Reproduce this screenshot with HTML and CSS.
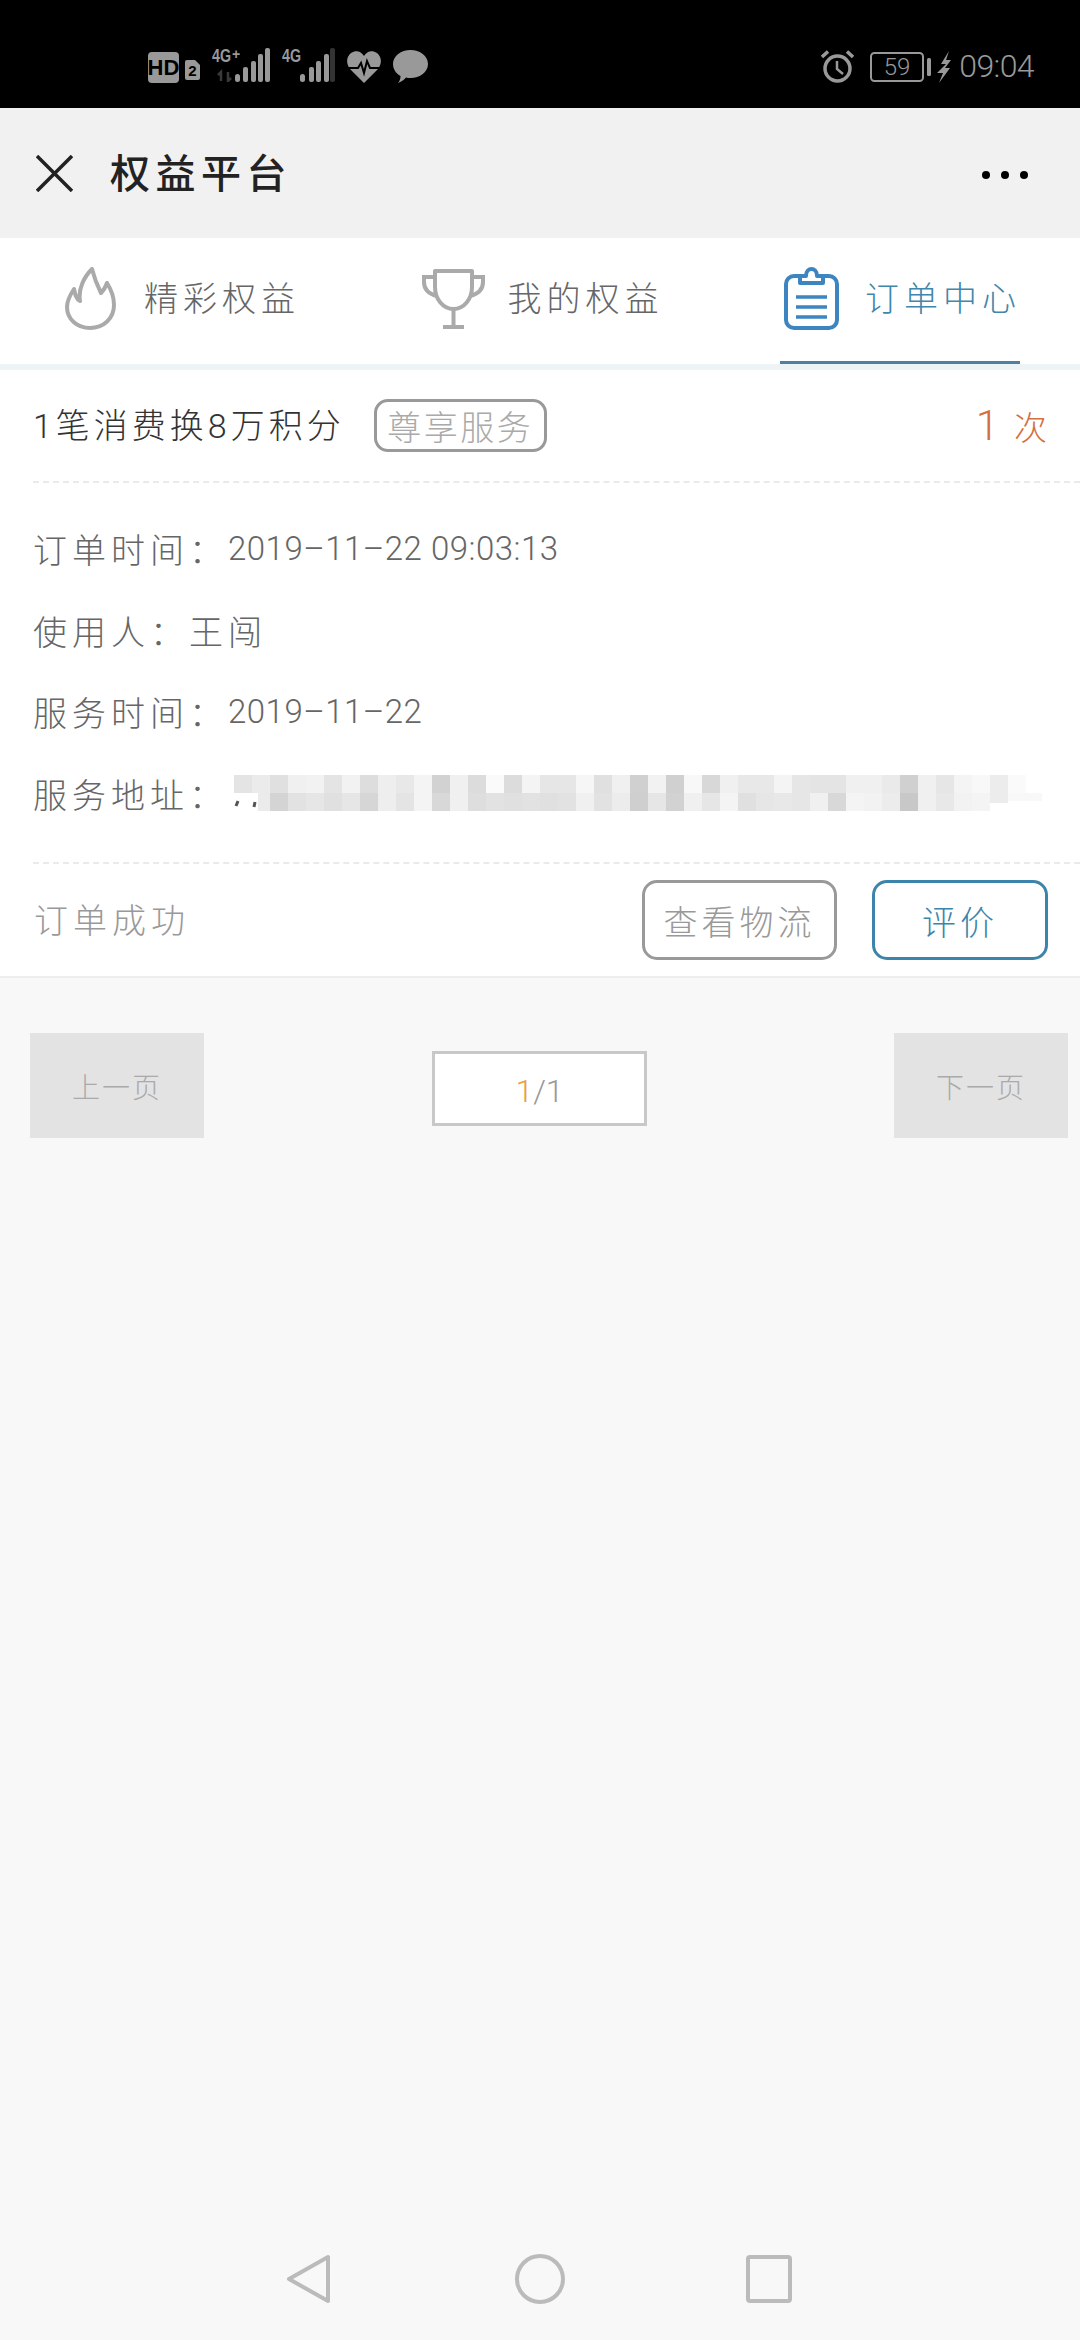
FILE: index.html
```html
<!DOCTYPE html>
<html lang="zh-CN">
<head>
  <meta charset="UTF-8">
  <meta name="viewport" content="width=device-width, initial-scale=1.0">
  <title>权益平台</title>
  <link rel="stylesheet" href="styles.css">
</head>
<body>
  <div class="status-bar">
    <div class="status-left">
      <svg class="icon-hd" width="31" height="31" viewBox="0 0 31 31">
        <rect width="31" height="31" rx="4" fill="#999"/>
        <text x="15.5" y="23" text-anchor="middle" class="svg-hd">HD</text>
      </svg>
      <svg class="icon-sim" width="15" height="20" viewBox="0 0 15 20">
        <path d="M2 0H10L15 5V18a2 2 0 0 1-2 2H2a2 2 0 0 1-2-2V2a2 2 0 0 1 2-2Z" fill="#999"/>
        <text x="7.5" y="16" text-anchor="middle" class="svg-sim">2</text>
      </svg>
      <svg class="icon-signal" width="58" height="38" viewBox="0 0 58 38">
        <text x="0" y="18" textLength="19" lengthAdjust="spacingAndGlyphs" class="svg-net">4G</text>
        <text x="20" y="15" class="svg-plus">+</text>
        <path d="M9 37V28L6 31M16 28V37L19 34" fill="none" stroke="#3a3a3a" stroke-width="2.500"/>
        <g fill="#999">
          <rect x="23" y="30" width="5" height="8" rx="2.5"/>
          <rect x="31" y="23" width="5" height="15" rx="2"/>
          <rect x="39" y="17" width="5" height="21" rx="2"/>
          <rect x="46" y="10" width="5" height="28" rx="2"/>
          <rect x="53" y="4" width="5" height="34" rx="2"/>
        </g>
      </svg>
      <svg class="icon-signal" width="53" height="38" viewBox="0 0 53 38">
        <text x="0" y="18" textLength="19" lengthAdjust="spacingAndGlyphs" class="svg-net">4G</text>
        <g fill="#999">
          <rect x="18" y="30" width="5" height="8" rx="2.5"/>
          <rect x="27" y="23" width="5" height="15" rx="2"/>
          <rect x="34" y="17" width="5" height="21" rx="2"/>
          <rect x="42" y="10" width="5" height="28" rx="2"/>
        </g>
        <rect x="48" y="4" width="5" height="34" rx="2" fill="#333"/>
      </svg>
      <svg class="icon-heart" width="34" height="32" viewBox="0 0 34 32">
        <path d="M17 32L3 18C-1 13-1 6 4 2C9-1 14 0 17 5C20 0 25-1 30 2C35 6 35 13 31 18Z" fill="#999"/>
        <path d="M1 17H11L14 12L17 22L20 10L23 17H33" fill="none" stroke="#000" stroke-width="2"/>
      </svg>
      <svg class="icon-bubble" width="35" height="33" viewBox="0 0 35 33">
        <path d="M17.5 0C27 0 35 6 35 14C35 22 27 28 17.5 28C16 28 14.500 28 13 27.500C11 30 8 32 5 33C7 31 7.500 28 7.500 26C3 23.500 0 19 0 14C0 6 8 0 17.5 0Z" fill="#999"/>
      </svg>
    </div>
    <div class="status-right">
      <svg class="icon-alarm" width="33" height="33" viewBox="0 0 33 33">
        <circle cx="16.500" cy="18.500" r="12.500" fill="none" stroke="#999" stroke-width="3.500"/>
        <path d="M16 11V19L22 24" fill="none" stroke="#999" stroke-width="2.500"/>
        <path d="M1 7L7 1.500M32 7L26 1.500" fill="none" stroke="#999" stroke-width="3.500"/>
      </svg>
      <svg class="icon-battery" width="61" height="30" viewBox="0 0 61 30">
        <rect x="1" y="1" width="52" height="28" rx="3.500" fill="none" stroke="#999" stroke-width="2"/>
        <text x="27" y="23" text-anchor="middle" class="svg-level">59</text>
        <rect x="57" y="6" width="4" height="18" rx="1.500" fill="#999"/>
      </svg>
      <svg class="icon-bolt" width="14" height="32" viewBox="0 0 14 32">
        <path d="M12 0L4 13L9 13L0 22L6 22L2 32L13 17L8 17L14 9L9 9Z" fill="#999"/>
      </svg>
      <span class="status-time">09:04</span>
    </div>
  </div>

  <div class="top-bar">
    <svg class="icon-close" width="37" height="37" viewBox="0 0 37 37">
      <path d="M1 1L36 36M36 1L1 36" fill="none" stroke="#222" stroke-width="3.500"/>
    </svg>
    <span class="top-title">权益平台</span>
    <div class="top-dots"><i></i><i></i><i></i></div>
  </div>

  <div class="tabs">
    <div class="tab">
      <svg width="51" height="63" viewBox="0 0 51 63">
        <path d="M27 2C30 14 33 20 36 26C39 23 41 19 42 16C47 24 49 31 49 38C49 52 38 61 25 61C12 61 2 52 2 40C2 33 5 28 9 22C10 27 11 32 15 34C13 22 19 10 27 2Z" fill="none" stroke="#aaa" stroke-width="4" stroke-linejoin="round"/>
      </svg>
      <span>精彩权益</span>
    </div>
    <div class="tab tab-trophy">
      <svg width="63" height="62" viewBox="0 0 63 62">
        <path d="M13 4H50V20C50 32 42 42 31.500 42C21 42 13 32 13 20Z" fill="none" stroke="#aaa" stroke-width="4" stroke-linejoin="round"/>
        <path d="M13 10H2V15C2 22 7 27 15 29M50 10H61V15C61 22 56 27 48 29" fill="none" stroke="#aaa" stroke-width="4"/>
        <path d="M31.500 42V60M21 60H42" fill="none" stroke="#aaa" stroke-width="4"/>
      </svg>
      <span>我的权益</span>
    </div>
    <div class="tab tab-active">
      <svg width="55" height="63" viewBox="0 0 55 63">
        <rect x="2" y="9" width="51" height="52" rx="8" fill="none" stroke="#3d85c0" stroke-width="4"/>
        <path d="M16 16V9H22C22 4 25 2 27.500 2C30 2 33 4 33 9H39V16Z" fill="#fff" stroke="#3d85c0" stroke-width="4" stroke-linejoin="round"/>
        <path d="M12 30H43M12 40H43M12 50H43" fill="none" stroke="#3d85c0" stroke-width="3.500"/>
      </svg>
      <span>订单中心</span>
    </div>
  </div>

  <div class="order-card">
    <div class="order-head">
      <span class="order-name">1笔消费换8万积分</span>
      <span class="order-tag">尊享服务</span>
      <span class="order-count"><b>1</b>次</span>
    </div>
    <div class="order-info">
      <div class="info-row">
        <span class="info-label">订单时间：</span><span class="info-num">2019–11–22 09:03:13</span>
      </div>
      <div class="info-row">
        <span class="info-label">使用人：</span><span class="info-name">王闯</span>
      </div>
      <div class="info-row">
        <span class="info-label">服务时间：</span><span class="info-num">2019–11–22</span>
      </div>
      <div class="info-row">
        <span class="info-label">服务地址：</span>
        <svg class="addr-blur" width="810" height="36" viewBox="0 0 810 36" shape-rendering="crispEdges">
          <g class="blur-top">
            <rect x="0" width="18" height="18" fill="#e4e4e4"/><rect x="18" width="18" height="18" fill="#ebebeb"/><rect x="36" width="18" height="18" fill="#e0e0e0"/><rect x="54" width="18" height="18" fill="#f0f0f0"/><rect x="72" width="18" height="18" fill="#f2f2f2"/><rect x="90" width="18" height="18" fill="#e4e4e4"/><rect x="108" width="18" height="18" fill="#f2f2f2"/><rect x="126" width="18" height="18" fill="#dddddd"/><rect x="144" width="18" height="18" fill="#eeeeee"/><rect x="162" width="18" height="18" fill="#e8e8e8"/><rect x="180" width="18" height="18" fill="#f4f4f4"/>
            <rect x="198" width="18" height="18" fill="#d2d2d2"/><rect x="216" width="18" height="18" fill="#f0f0f0"/><rect x="234" width="18" height="18" fill="#dcdcdc"/><rect x="252" width="18" height="18" fill="#fafafa"/><rect x="270" width="18" height="18" fill="#dcdcdc"/><rect x="288" width="18" height="18" fill="#f4f4f4"/><rect x="306" width="18" height="18" fill="#e6e6e6"/><rect x="324" width="18" height="18" fill="#e6e6e6"/><rect x="342" width="18" height="18" fill="#f6f6f6"/><rect x="360" width="18" height="18" fill="#e0e0e0"/><rect x="378" width="18" height="18" fill="#f0f0f0"/>
            <rect x="396" width="18" height="18" fill="#d0d0d0"/><rect x="414" width="18" height="18" fill="#f2f2f2"/><rect x="432" width="18" height="18" fill="#d0d0d0"/><rect x="450" width="18" height="18" fill="#f8f8f8"/><rect x="468" width="18" height="18" fill="#d8d8d8"/><rect x="486" width="18" height="18" fill="#f0f0f0"/><rect x="504" width="18" height="18" fill="#e8e8e8"/><rect x="522" width="18" height="18" fill="#e8e8e8"/><rect x="540" width="18" height="18" fill="#f4f4f4"/><rect x="558" width="18" height="18" fill="#e6e6e6"/><rect x="576" width="18" height="18" fill="#e4e4e4"/>
            <rect x="594" width="18" height="18" fill="#e4e4e4"/><rect x="612" width="18" height="18" fill="#f0f0f0"/><rect x="630" width="18" height="18" fill="#f0f0f0"/><rect x="648" width="18" height="18" fill="#eaeaea"/><rect x="666" width="18" height="18" fill="#d0d0d0"/><rect x="684" width="18" height="18" fill="#f0f0f0"/><rect x="702" width="18" height="18" fill="#e6e6e6"/><rect x="720" width="18" height="18" fill="#f4f4f4"/><rect x="738" width="18" height="18" fill="#f8f8f8"/><rect x="756" width="18" height="18" fill="#ececec"/><rect x="774" width="18" height="18" fill="#fafafa"/>
          </g>
          <g class="blur-bottom">
            <rect x="24" y="18" width="12" height="18" fill="#ebebeb"/><rect x="36" y="18" width="18" height="18" fill="#d4d4d4"/><rect x="54" y="18" width="18" height="18" fill="#e2e2e2"/><rect x="72" y="18" width="18" height="18" fill="#e6e6e6"/><rect x="90" y="18" width="18" height="18" fill="#e0e0e0"/><rect x="108" y="18" width="18" height="18" fill="#e6e6e6"/><rect x="126" y="18" width="18" height="18" fill="#d6d6d6"/><rect x="144" y="18" width="18" height="18" fill="#eeeeee"/><rect x="162" y="18" width="18" height="18" fill="#e4e4e4"/><rect x="180" y="18" width="18" height="18" fill="#f4f4f4"/>
            <rect x="198" y="18" width="18" height="18" fill="#d8d8d8"/><rect x="216" y="18" width="18" height="18" fill="#f0f0f0"/><rect x="234" y="18" width="18" height="18" fill="#dedede"/><rect x="252" y="18" width="18" height="18" fill="#e2e2e2"/><rect x="270" y="18" width="18" height="18" fill="#e0e0e0"/><rect x="288" y="18" width="18" height="18" fill="#e2e2e2"/><rect x="306" y="18" width="18" height="18" fill="#e0e0e0"/><rect x="324" y="18" width="18" height="18" fill="#e2e2e2"/><rect x="342" y="18" width="18" height="18" fill="#f0f0f0"/><rect x="360" y="18" width="18" height="18" fill="#e2e2e2"/><rect x="378" y="18" width="18" height="18" fill="#ececec"/>
            <rect x="396" y="18" width="18" height="18" fill="#cfcfcf"/><rect x="414" y="18" width="18" height="18" fill="#e6e6e6"/><rect x="432" y="18" width="18" height="18" fill="#d2d2d2"/><rect x="450" y="18" width="18" height="18" fill="#f0f0f0"/><rect x="468" y="18" width="18" height="18" fill="#e6e6e6"/><rect x="486" y="18" width="18" height="18" fill="#f4f4f4"/><rect x="504" y="18" width="18" height="18" fill="#e0e0e0"/><rect x="522" y="18" width="18" height="18" fill="#e6e6e6"/><rect x="540" y="18" width="18" height="18" fill="#e8e8e8"/><rect x="558" y="18" width="18" height="18" fill="#e6e6e6"/><rect x="576" y="18" width="18" height="18" fill="#f0f0f0"/>
            <rect x="594" y="18" width="18" height="18" fill="#d8d8d8"/><rect x="612" y="18" width="18" height="18" fill="#f4f4f4"/><rect x="630" y="18" width="18" height="18" fill="#f2f2f2"/><rect x="648" y="18" width="18" height="18" fill="#ececec"/><rect x="666" y="18" width="18" height="18" fill="#c8c8c8"/><rect x="684" y="18" width="18" height="18" fill="#f0f0f0"/><rect x="702" y="18" width="18" height="18" fill="#e8e8e8"/><rect x="720" y="18" width="18" height="18" fill="#f2f2f2"/><rect x="738" y="18" width="18" height="18" fill="#f4f4f4"/><rect x="756" y="18" width="18" height="10" fill="#ececec"/><rect x="774" y="18" width="34" height="8" fill="#f8f8f8"/>
          </g>
          <path d="M2 31L4 26M20 32L21 27" fill="none" stroke="#555" stroke-width="3" shape-rendering="auto"/>
        </svg>
      </div>
    </div>
    <div class="order-foot">
      <span class="order-state">订单成功</span>
      <button class="foot-btn btn-logistics">查看物流</button>
      <button class="foot-btn btn-review">评价</button>
    </div>
  </div>

  <div class="pager">
    <div class="pager-btn">上一页</div>
    <div class="pager-mid"><span class="pager-cur">1</span>/1</div>
    <div class="pager-btn">下一页</div>
  </div>

  <div class="nav-bar">
    <svg width="50" height="50" viewBox="0 0 50 50">
      <path d="M43 3V47L4 25Z" fill="none" stroke="#bbb" stroke-width="4" stroke-linejoin="round"/>
    </svg>
    <svg width="50" height="50" viewBox="0 0 50 50">
      <circle cx="25" cy="25" r="23" fill="none" stroke="#bbb" stroke-width="4"/>
    </svg>
    <svg width="50" height="50" viewBox="0 0 50 50">
      <rect x="3" y="3" width="42" height="44" rx="2" fill="none" stroke="#bbb" stroke-width="4"/>
    </svg>
  </div>
</body>
</html>
```

FILE: styles.css
```css
* {
  box-sizing: border-box;
}

body {
  margin: 0;
  width: 1080px;
  height: 2340px;
  display: flex;
  flex-direction: column;
  background: #f8f8f8;
  font-family: Roboto, "Noto Sans CJK SC", sans-serif;
  font-weight: 300;
  overflow: hidden;
}

/* Status bar */
.status-bar {
  height: 108px;
  flex: none;
  background: #000;
  display: flex;
  justify-content: space-between;
  align-items: flex-start;
  padding: 50px 46px 0 148px;
  color: #999;
}

.status-left {
  display: flex;
  align-items: flex-end;
  gap: 12px;
  height: 33px;
}

.status-right {
  display: flex;
  align-items: center;
  height: 33px;
}

.icon-sim {
  margin-left: -6px;
  margin-bottom: 3px;
}

.icon-signal {
  margin-bottom: 1px;
  flex: none;
}

.icon-alarm {
  margin-right: 16px;
}

.icon-battery {
  margin-right: 6px;
}

.icon-bolt {
  margin-right: 8px;
}

.status-time {
  font-size: 32px;
  letter-spacing: -0.600px;
  line-height: 33px;
}

.svg-hd {
  font-family: "Liberation Sans", sans-serif;
  font-size: 22px;
  font-weight: 700;
  fill: #000;
}

.svg-sim {
  font-family: "Liberation Sans", sans-serif;
  font-size: 15px;
  font-weight: 700;
  fill: #000;
}

.svg-net {
  font-family: "Liberation Sans", sans-serif;
  font-size: 18px;
  font-weight: 700;
  fill: #999;
}

.svg-plus {
  font-family: "Liberation Sans", sans-serif;
  font-size: 14px;
  font-weight: 700;
  fill: #999;
}

.svg-level {
  font-family: Roboto, sans-serif;
  font-size: 24px;
  font-weight: 300;
  fill: #999;
}

/* Top bar */
.top-bar {
  height: 130px;
  flex: none;
  background: #f1f1f1;
  display: flex;
  align-items: center;
  padding: 0 52px 0 36px;
}

.top-title {
  margin-left: 37px;
  padding-bottom: 4px;
  font-size: 40px;
  font-weight: 500;
  letter-spacing: 5.500px;
  color: #222;
}

.top-dots {
  margin-left: auto;
  margin-top: 4px;
  display: flex;
  gap: 11px;
}

.top-dots i {
  width: 8px;
  height: 8px;
  border-radius: 50%;
  background: #000;
}

/* Tabs */
.tabs {
  height: 132px;
  flex: none;
  background: #fff;
  border-bottom: 6px solid #eef3f6;
  display: grid;
  grid-template-columns: repeat(3, 360px);
  justify-items: center;
}

.tab {
  width: 240px;
  height: 126px;
  display: flex;
  align-items: center;
  justify-content: center;
  padding-bottom: 6px;
  font-size: 34px;
  letter-spacing: 5px;
  color: #666;
  white-space: nowrap;
}

.tab svg {
  flex: none;
  margin-right: 28px;
}

.tab span {
  margin-right: -5px;
  padding-bottom: 3px;
}

.tab-trophy svg {
  margin-right: 23px;
}

.tab-active {
  color: #3f87ab;
  border-bottom: 3px solid #4a82a2;
  padding-bottom: 3px;
}

.tab-active svg {
  margin-right: 26px;
}

/* Order card */
.order-card {
  flex: none;
  background: #fff;
  border-bottom: 2px solid #eeeeee;
}

.order-head {
  height: 113px;
  margin-left: 33px;
  padding-right: 33px;
  border-bottom: 2px dashed #eaeaea;
  display: flex;
  align-items: center;
}

.order-name {
  padding-bottom: 4px;
  font-size: 34px;
  letter-spacing: 4px;
  color: #333;
}

.order-tag {
  margin-left: 29px;
  width: 173px;
  height: 53px;
  border: 3px solid #999;
  border-radius: 14px;
  display: flex;
  align-items: center;
  justify-content: center;
  font-size: 34px;
  letter-spacing: 2.500px;
  color: #aaa;
}

.order-count {
  margin-left: auto;
  display: flex;
  align-items: baseline;
  gap: 15px;
  font-size: 33px;
  color: #d2703f;
}

.order-count b {
  font-size: 42px;
  font-weight: 300;
}

.order-info {
  margin-left: 33px;
  padding: 25px 0 28px;
  border-bottom: 2px dashed #eaeaea;
}

.info-row {
  height: 81.500px;
  display: flex;
  align-items: center;
  color: #666;
  font-size: 34px;
  letter-spacing: 5px;
}

.info-num {
  font-size: 33px;
  letter-spacing: 0.500px;
}

.addr-blur {
  margin-left: 6px;
  flex: none;
  overflow: visible;
}

.order-foot {
  height: 112px;
  padding: 0 32px 0 34px;
  display: flex;
  align-items: center;
  gap: 35px;
}

.order-state {
  margin-right: auto;
  padding-bottom: 4px;
  font-size: 34px;
  letter-spacing: 5px;
  color: #999;
}

.foot-btn {
  height: 80px;
  border-radius: 15px;
  border: 3px solid #999;
  background: #fff;
  font-family: inherit;
  font-weight: 300;
  font-size: 34px;
  letter-spacing: 4px;
  color: #999;
  padding: 0;
}

.btn-logistics {
  width: 195px;
}

.btn-review {
  width: 176px;
  border-color: #3d84ab;
  color: #3d84ab;
}

/* Pager */
.pager {
  display: grid;
  grid-template-columns: 174px 1fr 174px;
  align-items: center;
  padding: 55px 12px 0 30px;
}

.pager-btn {
  height: 105px;
  background: #e3e3e3;
  display: flex;
  align-items: center;
  justify-content: center;
  font-size: 28px;
  letter-spacing: 2px;
  color: #aaa;
}

.pager-mid {
  justify-self: center;
  margin: 5px 19px 0 0;
  width: 215px;
  height: 75px;
  padding-top: 6px;
  background: #fff;
  border: 3px solid #c8c8c8;
  display: flex;
  align-items: center;
  justify-content: center;
  font-size: 32px;
  color: #999;
}

.pager-cur {
  color: #e8a040;
}

/* Nav bar */
.nav-bar {
  margin-top: auto;
  padding-bottom: 36px;
  display: flex;
  justify-content: center;
  gap: 180px;
}
```
